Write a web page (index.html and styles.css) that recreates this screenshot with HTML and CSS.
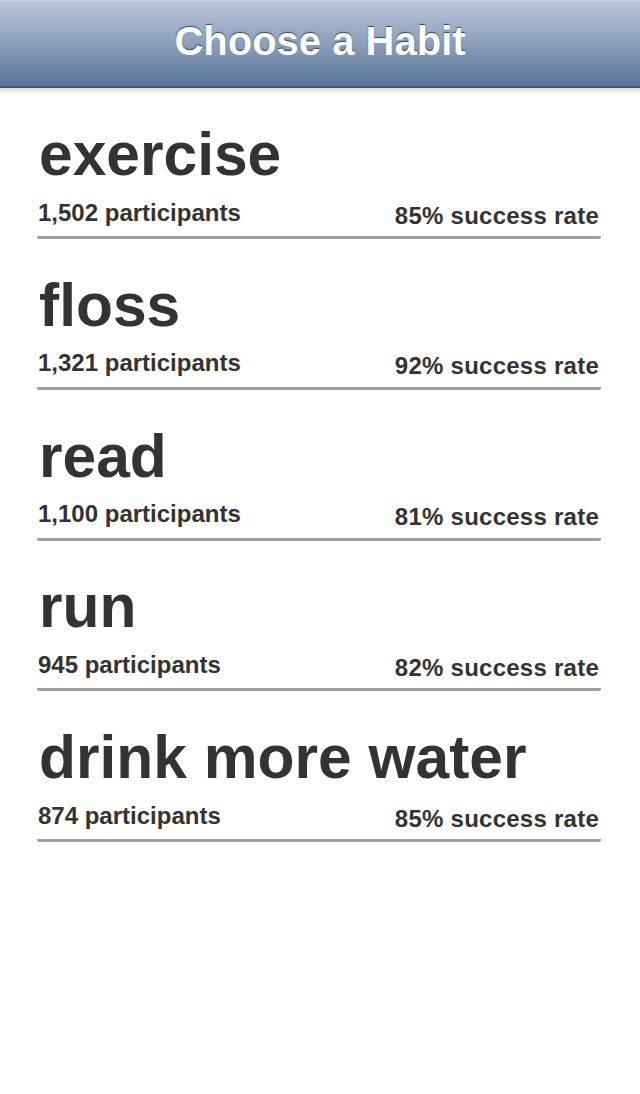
FILE: index.html
```html
<!DOCTYPE html>
<html>
<head>
<meta charset="utf-8">
<link rel="stylesheet" href="styles.css">
</head>
<body>
<header class="navbar">
  <h1 class="nav-title">Choose a Habit</h1>
</header>
<div class="nav-shadow"></div>
<ul class="habit-list">
  <li class="habit">
    <div class="habit-name">exercise</div>
    <div class="habit-meta"><span class="participants">1,502 participants</span><span class="rate">85% success rate</span></div>
  </li>
  <li class="habit">
    <div class="habit-name">floss</div>
    <div class="habit-meta"><span class="participants">1,321 participants</span><span class="rate">92% success rate</span></div>
  </li>
  <li class="habit">
    <div class="habit-name">read</div>
    <div class="habit-meta"><span class="participants">1,100 participants</span><span class="rate">81% success rate</span></div>
  </li>
  <li class="habit">
    <div class="habit-name">run</div>
    <div class="habit-meta"><span class="participants">945 participants</span><span class="rate">82% success rate</span></div>
  </li>
  <li class="habit">
    <div class="habit-name">drink more water</div>
    <div class="habit-meta"><span class="participants">874 participants</span><span class="rate">85% success rate</span></div>
  </li>
</ul>
</body>
</html>
```
FILE: styles.css
```css
* { box-sizing: border-box; }
html, body { margin: 0; padding: 0; background: #ffffff; }
body {
  font-family: "Liberation Sans", Arial, Helvetica, sans-serif;
  width: 640px;
  height: 1094px;
  overflow: hidden;
}
.navbar {
  height: 88px;
  background: linear-gradient(to bottom, #cfd9e6 0px, #b8c5d8 2px, #8fa3bf 40px, #5a7497 86px);
  border-bottom: 2px solid #3f5679;
  display: flex;
  align-items: center;
  justify-content: center;
}
.nav-title {
  margin: 0;
  font-size: 40px;
  font-weight: bold;
  color: #ffffff;
  line-height: 1;
  text-shadow: 0 -1px 1px rgba(20, 30, 50, 0.75);
  padding-bottom: 4px;
}
.nav-shadow {
  height: 6px;
  background: linear-gradient(to bottom, #d8d8d8, #ffffff);
}
.habit-list {
  list-style: none;
  margin: 0;
  padding: 30px 39px 0 37px;
}
.habit {
  padding-bottom: 10.5px;
  border-bottom: 3px solid #a0a0a0;
  border-radius: 2px;
  margin-bottom: 35.75px;
}
.habit-name {
  font-size: 60.5px;
  font-weight: bold;
  color: #333333;
  line-height: 60px;
  padding-left: 2px;
  margin-bottom: 15.5px;
}
.habit-meta {
  display: flex;
  justify-content: space-between;
  align-items: flex-start;
  font-size: 24px;
  font-weight: bold;
  color: #333333;
  line-height: 26px;
  padding-left: 1px;
}
.rate {
  margin-top: 3px;
  margin-bottom: -3px;
  padding-right: 2px;
  letter-spacing: 0.25px;
}
```
